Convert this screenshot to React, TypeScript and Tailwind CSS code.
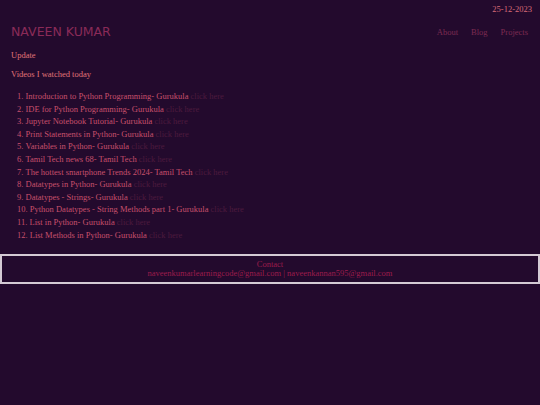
const videos = [
  "Introduction to Python Programming- Gurukula",
  "IDE for Python Programming- Gurukula",
  "Jupyter Notebook Tutorial- Gurukula",
  "Print Statements in Python- Gurukula",
  "Variables in Python- Gurukula",
  "Tamil Tech news 68- Tamil Tech",
  "The hottest smartphone Trends 2024- Tamil Tech",
  "Datatypes in Python- Gurukula",
  "Datatypes - Strings- Gurukula",
  "Python Datatypes - String Methods part 1- Gurukula",
  "List in Python- Gurukula",
  "List Methods in Python- Gurukula",
];

export default function App() {
  return (
    <div className="min-h-[405px] bg-[#230a2d] font-['Liberation_Serif',serif] text-[8.5px] leading-[10px] text-[#c8506c]">
      <div className="flex justify-end pt-[4px] pr-[8px] text-[#d86a78]">
        25-12-2023
      </div>

      <header className="mt-[10px] flex items-center justify-between pl-[11px] pr-[12px]">
        <h1 className="font-['DejaVu_Sans',sans-serif] text-[12.5px] leading-[15px] text-[#8a2a58]">
          NAVEEN KUMAR
        </h1>
        <nav className="flex gap-[13px] text-[#7d2a52]">
          <a>About</a>
          <a>Blog</a>
          <a>Projects</a>
        </nav>
      </header>

      <p className="mt-[11px] pl-[11px] text-[#e07478]">Update</p>
      <p className="mt-[9px] pl-[11px] text-[#e07478]">Videos I watched today</p>

      <ol className="mt-[11px] list-inside list-decimal pl-[17px] leading-[12.6px]">
        {videos.map((v) => (
          <li key={v}>
            {v} <a className="text-[#4d1a3e]">click here</a>
          </li>
        ))}
      </ol>

      <footer className="mt-[13px] border-2 border-[#d4cad4] pt-[3.5px] pb-[3.5px] text-center leading-[9.5px] text-[#9c1c4c]">
        <p>Contact</p>
        <p>naveenkumarlearningcode@gmail.com | naveenkannan595@gmail.com</p>
      </footer>
    </div>
  );
}
